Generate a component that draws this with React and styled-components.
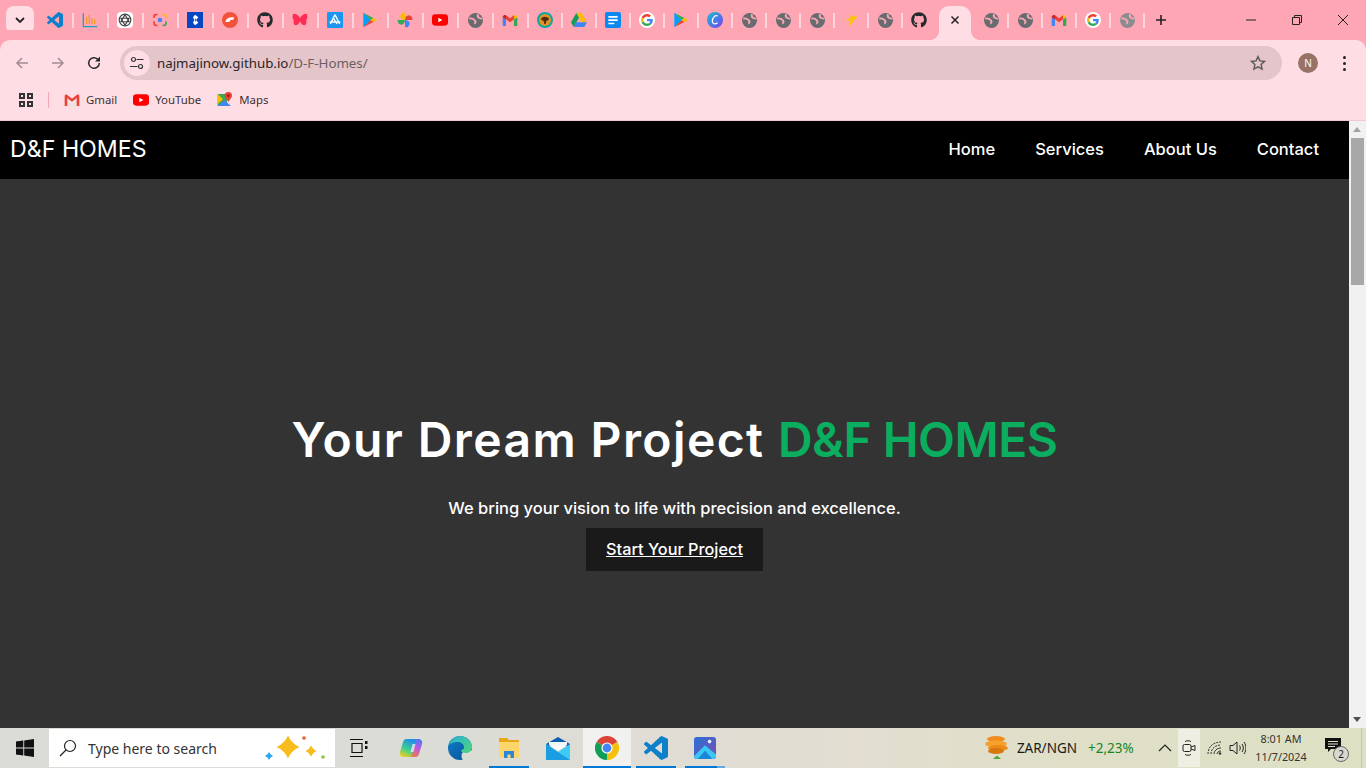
import React from 'react';
import styled, {createGlobalStyle} from 'styled-components';
import {FaGithub} from 'react-icons/fa';

const GOOGLE = [
    ['#EA4335', 'M24 9.5c3.54 0 6.71 1.22 9.21 3.6l6.85-6.85C35.9 2.38 30.47 0 24 0 14.62 0 6.51 5.38 2.56 13.22l7.98 6.19C12.43 13.72 17.74 9.5 24 9.5z'],
    ['#4285F4', 'M46.98 24.55c0-1.57-.15-3.09-.38-4.55H24v9.02h12.94c-.58 2.96-2.26 5.48-4.78 7.18l7.73 6c4.51-4.18 7.09-10.36 7.09-17.65z'],
    ['#FBBC05', 'M10.53 28.59c-.48-1.45-.76-2.99-.76-4.59s.27-3.14.76-4.59l-7.98-6.19C.92 16.46 0 20.12 0 24c0 3.88.92 7.54 2.56 10.78l7.97-6.19z'],
    ['#34A853', 'M24 48c6.48 0 11.93-2.13 16.03-5.81l-7.73-6c-2.15 1.45-4.92 2.3-8.3 2.3-6.26 0-11.57-4.22-13.47-9.91l-7.98 6.19C6.51 42.62 14.62 48 24 48z'],
];
const VSCODE = 'M23.15 2.587L18.21.21a1.494 1.494 0 0 0-1.705.29l-9.46 8.63-4.12-3.128a.999.999 0 0 0-1.276.057L.327 7.261A1 1 0 0 0 .326 8.74L3.899 12 .326 15.26a1 1 0 0 0 .001 1.479L1.65 17.94a.999.999 0 0 0 1.276.057l4.12-3.128 9.46 8.63a1.492 1.492 0 0 0 1.704.29l4.942-2.377A1.5 1.5 0 0 0 24 20.06V3.939a1.5 1.5 0 0 0-.85-1.352zm-5.146 14.861L10.826 12l7.178-5.448v10.896z';

const Ico = ({size = 16, box = 24, children}) => (
    <svg width={size} height={size} viewBox={`0 0 ${box} ${box}`} style={{display: 'block', flex: 'none'}}>{children}</svg>
);

const Globe = ({faded}) => (
    <Ico size={15}>
        <circle cx="12" cy="12" r="12" fill={faded ? '#8b8c8f' : '#686c70'}/>
        <path d="M2 9c4-1 7 0 9 3 2 2 1 4-1 5M16 2c-1 3 0 5 2 6 2 1 3 1 5 1" fill="none" stroke="#ffa6b5" strokeWidth="3"/>
    </Ico>
);
const GoogleG = ({size = 12}) => <Ico size={size} box={48}>{GOOGLE.map(([c, d]) => <path key={c} fill={c} d={d}/>)}</Ico>;
const GoogleRound = () => (
    <GoogleDisc><GoogleG/></GoogleDisc>
);
const VsCode = ({size = 16}) => <Ico size={size}><path fill="#0e80c9" d={VSCODE}/></Ico>;
const Gmail = ({size = 16}) => (
    <Ico size={size}>
        <path fill="#4285f4" d="M1 8v12a1 1 0 0 0 1 1h4V11z"/>
        <path fill="#34a853" d="M23 8v12a1 1 0 0 1-1 1h-4V11z"/>
        <path fill="#ea4335" d="M6 11V5l6 4.500 6-4.500v6l-6 4.500z"/>
        <path fill="#c5221f" d="M1 8c0-3 3-4.500 5-3v6z"/>
        <path fill="#fbbc04" d="M23 8c0-3-3-4.500-5-3v6z"/>
    </Ico>
);
const GmailOutline = () => (
    <Ico size={16}>
        <path fill="#efe3e3" d="M5 9l7 5.500L19 9v12H5z"/>
        <path fill="#ea4335" d="M1 6c0-2 2-3 3.500-2L12 10l7.500-6C21 3 23 4 23 6v15h-4V9l-7 5.500L5 9v12H1z"/>
    </Ico>
);
const YouTube = ({size = 16}) => (
    <Ico size={size}>
        <rect x="0" y="3.500" width="24" height="17" rx="5" fill="#f00"/>
        <path d="M9.500 8.500v7l6-3.500z" fill="#fff"/>
    </Ico>
);
const Play = () => (
    <Ico>
        <path fill="#00a0ff" d="M2 1v22l11-11z"/>
        <path fill="#34a853" d="M2 1l15 8-4 3z"/>
        <path fill="#ea4335" d="M2 23l15-8-4-3z"/>
        <path fill="#fbbc04" d="M17 9l6 3-6 3-4-3z"/>
    </Ico>
);
const Pinwheel = () => (
    <Ico>
        <path fill="#fbbc04" d="M12 12V1a6.500 6.500 0 0 0-7 5.500c0 3.500 3.500 5.500 7 5.500z"/>
        <path fill="#ea4335" d="M12 12h11a6.500 6.500 0 0 0-5.500-7c-3.500 0-5.500 3.500-5.500 7z"/>
        <path fill="#4285f4" d="M12 12v11a6.500 6.500 0 0 0 7-5.500c0-3.500-3.500-5.500-7-5.500z"/>
        <path fill="#34a853" d="M12 12H1a6.500 6.500 0 0 0 5.500 7c3.500 0 5.500-3.500 5.500-7z"/>
    </Ico>
);
const Drive = () => (
    <Ico>
        <path fill="#fbbc04" d="M8 1.500h8L24 15.500h-8z"/>
        <path fill="#0f9d58" d="M8 1.500L0 15.500l4 7L12 8.500z"/>
        <path fill="#4285f4" d="M8 15.500h16l-4 7H4z"/>
    </Ico>
);
const Docs = () => (
    <Ico>
        <rect width="24" height="24" rx="3" fill="#0c88f2"/>
        <path d="M5 6h14v2.500H5zM5 11h14v2.500H5zM5 16h9v2.500H5z" fill="#fff"/>
    </Ico>
);
const Chrome = () => (
    <Ico size={24}>
        <path fill="#db4437" d="M12 12L1.600 6A12 12 0 0 1 22.400 6z"/>
        <path fill="#f4c20d" d="M12 12L22.400 6A12 12 0 0 1 12 24z"/>
        <path fill="#0f9d58" d="M12 12V24A12 12 0 0 1 1.600 6z"/>
        <circle cx="12" cy="12" r="5.600" fill="#fff"/>
        <circle cx="12" cy="12" r="4.400" fill="#4285f4"/>
    </Ico>
);
const Star4 = ({x, y, r, fill}) => (
    <path fill={fill} d={`M${x} ${y - r}Q${x + r * .3} ${y - r * .3} ${x + r} ${y}Q${x + r * .3} ${y + r * .3} ${x} ${y + r}Q${x - r * .3} ${y + r * .3} ${x - r} ${y}Q${x - r * .3} ${y - r * .3} ${x} ${y - r}z`}/>
);

const firstTabs = () => [
    <VsCode/>,
    <Ico><path d="M2 2v20h21" fill="none" stroke="#19a3c4" strokeWidth="2"/><path d="M7 18V8M11 18V4M15 18V9M19 18V11" stroke="#f59a23" strokeWidth="2"/></Ico>,
    <ChatDisc><Ico size={14}><g fill="none" stroke="#444" strokeWidth="2"><circle cx="12" cy="12" r="10"/><path d="M12 3l7 12H5zM12 21L5 9h14z"/></g></Ico></ChatDisc>,
    <Ico><g fill="none" strokeWidth="2.400"><path d="M8 4H6a3 3 0 0 0-3 3v2" stroke="#ea4335"/><path d="M16 4h2a3 3 0 0 1 3 3v2" stroke="#fbbc04"/><path d="M3 14v3a3 3 0 0 0 3 3h2" stroke="#ea4335"/><path d="M16 20h2a3 3 0 0 0 3-3v-3" stroke="#34a853"/></g><circle cx="12" cy="12" r="3.500" fill="#4285f4"/></Ico>,
    <Ico><rect width="24" height="24" fill="#0747c4"/><path d="M12 4l5 4-3.500 4 3.500 4-5 4-3-4 2-4-2-4z" fill="#fff"/><path d="M12 8.500l1.500 3.500-1.500 3.500z" fill="#0747c4"/></Ico>,
    <Ico><circle cx="12" cy="12" r="12" fill="#f0533a"/><path d="M5 15c1-6 6-8 13-7l-1 4c-3-1-5 0-6 3z" fill="#fff"/></Ico>,
    <FaGithub size={16} color="#24292e"/>,
    <Ico><path fill="#ff2d55" d="M12 9C9 4 4 2 2 3 0 5 1 11 3 13c-2 2 0 7 3 7 3 0 5-4 6-6 1 2 3 6 6 6 3 0 5-5 3-7 2-2 3-8 1-10-2-1-7 1-10 6z"/></Ico>,
    <Ico><rect width="24" height="24" rx="2" fill="#1a95f2"/><path d="M12 4l-7 14M12 4l7 14M4 15h16M9 8l6 10" stroke="#fff" strokeWidth="2" fill="none"/></Ico>,
    <Play/>,
    <Pinwheel/>,
    <YouTube/>,
    <Globe/>,
    <Gmail/>,
    <Ico><circle cx="12" cy="12" r="12" fill="#0aa5a8"/><circle cx="12" cy="12" r="9" fill="#e8921c"/><path d="M6 10c2-4 10-4 12 0-1 3-3 3-4 3l-1 5h-2l-1-5c-1 0-3 0-4-3z" fill="#4a2c10"/></Ico>,
];
const middleTabs = () => [
    <Drive/>,
    <Docs/>,
    <GoogleRound/>,
    <Play/>,
    <Ico><defs><linearGradient id="cv" x1="0" y1="0" x2="1" y2="1"><stop offset="0" stopColor="#12c2d6"/><stop offset="1" stopColor="#7a3df0"/></linearGradient></defs><circle cx="12" cy="12" r="12" fill="url(#cv)"/><path d="M16 6c-4-2-8 3-8 8 0 4 4 5 8 2" fill="none" stroke="#fff" strokeWidth="1.800"/></Ico>,
    <Globe/>,
    <Globe/>,
    <Globe/>,
    <Ico><path fill="#f7c600" d="M12 1l3 6 8-1-6 6-7 10 1-9-9-3 9 0z"/></Ico>,
    <Globe/>,
    <FaGithub size={16} color="#24292e"/>,
];
const lastTabs = () => [<Globe/>, <Globe/>, <Gmail/>, <GoogleRound/>, <Globe faded/>];

const NAV = ['Home', 'Services', 'About Us', 'Contact'];

const GlobalStyle = createGlobalStyle`
    html, body {
        margin: 0;
        height: 100%;
        overflow: hidden;
    }
    * {
        box-sizing: border-box;
    }
`;

const App = () => {
    const middle = middleTabs();
    return (
    <Screen>
        <GlobalStyle/>
        <TabStrip>
            <ListButton>
                <svg width="10" height="6" viewBox="0 0 10 6"><path d="M1 1l4 4 4-4" fill="none" stroke="#222" strokeWidth="1.800"/></svg>
            </ListButton>
            {firstTabs().map((icon, i) => <PinnedTab key={i} $w={i === 14 ? 34.5 : 35}>{icon}</PinnedTab>)}
            {middle.map((icon, i) => <PinnedTab key={i} $w={34} $last={i === middle.length - 1}>{icon}</PinnedTab>)}
            <ActiveTab>
                <svg width="10" height="10" viewBox="0 0 10 10"><path d="M1.500 1.500l7 7M8.500 1.500l-7 7" stroke="#222" strokeWidth="1.500"/></svg>
            </ActiveTab>
            {lastTabs().map((icon, i) => <PinnedTab key={i} $w={34}>{icon}</PinnedTab>)}
            <NewTab>
                <svg width="12" height="12" viewBox="0 0 12 12"><path d="M6 1v10M1 6h10" stroke="#222" strokeWidth="1.600"/></svg>
            </NewTab>
            <WindowControls>
                <WindowButton><svg width="12" height="12" viewBox="0 0 12 12"><path d="M1 6h10" stroke="#222"/></svg></WindowButton>
                <WindowButton><svg width="12" height="12" viewBox="0 0 12 12"><path d="M1.500 3.500h7v7h-7zM3.500 3.500v-2h7v7h-2" fill="none" stroke="#222"/></svg></WindowButton>
                <WindowButton><svg width="12" height="12" viewBox="0 0 12 12"><path d="M1 1l10 10M11 1L1 11" stroke="#222"/></svg></WindowButton>
            </WindowControls>
        </TabStrip>

        <Toolbar>
            <ToolIcon>
                <svg width="16" height="16" viewBox="0 0 16 16"><path d="M14 8H3M8 3L3 8l5 5" fill="none" stroke="#a08c91" strokeWidth="1.500"/></svg>
            </ToolIcon>
            <ToolIcon>
                <svg width="16" height="16" viewBox="0 0 16 16"><path d="M2 8h11M8 3l5 5-5 5" fill="none" stroke="#a08c91" strokeWidth="1.500"/></svg>
            </ToolIcon>
            <ToolIcon>
                <svg width="16" height="16" viewBox="0 0 16 16"><path d="M13.300 8a5.300 5.300 0 1 1-1.600-3.800L13.500 6" fill="none" stroke="#2b2b2b" strokeWidth="1.500"/><path d="M14 1.500V6.500H9z" fill="#2b2b2b"/></svg>
            </ToolIcon>
            <Omnibox>
                <SiteInfo>
                    <svg width="14" height="14" viewBox="0 0 14 14"><g fill="none" stroke="#333" strokeWidth="1.200"><circle cx="3.500" cy="3.500" r="2"/><path d="M6.500 3.500h7M0 10.500h7.500"/><circle cx="10.500" cy="10.500" r="2"/></g></svg>
                </SiteInfo>
                <Url>najmajinow.github.io<span>/D-F-Homes/</span></Url>
                <StarIcon>
                    <svg width="16" height="16" viewBox="0 0 24 24"><path d="M12 2.500l2.900 6.300 6.900.8-5.100 4.700 1.400 6.800L12 17.700l-6.100 3.400 1.400-6.800-5.100-4.700 6.900-.8z" fill="none" stroke="#5f5a5e" strokeWidth="2.200"/></svg>
                </StarIcon>
            </Omnibox>
            <Avatar>N</Avatar>
            <MenuDots><i/><i/><i/></MenuDots>
        </Toolbar>

        <BookmarkBar>
            <AppsGrid><i/><i/><i/><i/></AppsGrid>
            <BarDivider/>
            <Bookmark><GmailOutline/>Gmail</Bookmark>
            <Bookmark><YouTube/>YouTube</Bookmark>
            <Bookmark>
                <Ico size={16}>
                    <path fill="#34a853" d="M1 3h14v18H1z"/>
                    <path fill="#4285f4" d="M1 21l10-9 10 9z"/>
                    <path fill="#fbbc04" d="M1 3l8 8-8 7z"/>
                    <path fill="#ea4335" d="M17 0a5.500 5.500 0 0 0-5.500 5.500C11.500 9 15 11 17 15c2-4 5.500-6 5.500-9.500A5.500 5.500 0 0 0 17 0z"/>
                    <circle cx="17" cy="5.500" r="2" fill="#a31515"/>
                </Ico>
                Maps
            </Bookmark>
        </BookmarkBar>

        <Viewport>
            <Page>
                <Navbar>
                    <Logo>D&amp;F HOMES</Logo>
                    <NavLinks>
                        {NAV.map(item => <NavLink key={item}>{item}</NavLink>)}
                    </NavLinks>
                </Navbar>
                <Hero>
                    <HeroTitle>Your Dream Project <em>D&amp;F HOMES</em></HeroTitle>
                    <HeroText>We bring your vision to life with precision and excellence.</HeroText>
                    <HeroButton>Start Your Project</HeroButton>
                </Hero>
            </Page>
            <Scrollbar>
                <ArrowUp/>
                <Thumb/>
                <ArrowDown/>
            </Scrollbar>
        </Viewport>

        <Taskbar>
            <StartButton>
                <svg width="18" height="18" viewBox="0 0 18 18"><path fill="#111" d="M0 2.600l7.300-1v7H0zM8.200 1.400L18 0v8.600H8.200zM0 9.400h7.300v7L0 15.400zM8.200 9.400H18V18l-9.800-1.400z"/></svg>
            </StartButton>
            <SearchBox>
                <svg width="18" height="18" viewBox="0 0 18 18"><g fill="none" stroke="#222" strokeWidth="1.200"><circle cx="11" cy="7" r="5.500"/><path d="M7 11l-6 6"/></g></svg>
                <SearchText>Type here to search</SearchText>
                <Sparkles>
                    <svg width="62" height="30" viewBox="0 0 62 30">
                        <Star4 x={4} y={23} r={4} fill="#2ea8f0"/>
                        <Star4 x={23} y={14} r={11.500} fill="#f8bd1c"/>
                        <Star4 x={46} y={18} r={5.500} fill="#f8bd1c"/>
                        <circle cx="39" cy="5" r="1.800" fill="#e8612c"/>
                        <circle cx="58" cy="24" r="1.800" fill="#8cc63f"/>
                    </svg>
                </Sparkles>
            </SearchBox>
            <TaskItems>
                <TaskItem>
                    <svg width="24" height="20" viewBox="0 0 24 20"><g fill="none" stroke="#111" strokeWidth="1.200"><path d="M0 1.500h13M0 18.500h13M2 5.500h10v9H2z"/></g><path d="M15 3h2.500v3H15zM15 8h2.500v3H15z" fill="#111"/></svg>
                </TaskItem>
                <TaskItem>
                    <svg width="24" height="20" viewBox="0 0 24 20">
                        <defs>
                            <linearGradient id="cp1" x1=".6" y1="0" x2=".2" y2="1"><stop offset="0" stopColor="#1f8fe8"/><stop offset=".55" stopColor="#3fd08c"/><stop offset="1" stopColor="#f5d020"/></linearGradient>
                            <linearGradient id="cp2" x1=".7" y1="0" x2=".3" y2="1"><stop offset="0" stopColor="#4a7cf0"/><stop offset=".45" stopColor="#c455e0"/><stop offset="1" stopColor="#f58030"/></linearGradient>
                        </defs>
                        <path fill="url(#cp2)" d="M17 19h-7c-1 0-2-.5-2.500-2L11 3c.5-1.500 1.500-2 3-2h5c3 0 5 2 4 5l-3 10c-.5 2-2 3-3 3z"/>
                        <path fill="url(#cp1)" d="M7 1h7c1 0 2 .5 2.500 2L13 17c-.5 1.500-1.500 2-3 2H5c-3 0-5-2-4-5L4 4C4.500 2 6 1 7 1z"/>
                        <path fill="#f5f0f5" d="M13.500 6h3L14.500 14h-3z" opacity=".75"/>
                    </svg>
                </TaskItem>
                <TaskItem>
                    <Ico size={24}>
                        <defs>
                            <linearGradient id="ed1" x1="0" y1="0" x2="1" y2="1"><stop offset="0" stopColor="#2bb3d6"/><stop offset="1" stopColor="#52d47c"/></linearGradient>
                            <linearGradient id="ed2" x1="0" y1="0" x2="1" y2="1"><stop offset="0" stopColor="#0c7fc8"/><stop offset="1" stopColor="#0b4f96"/></linearGradient>
                        </defs>
                        <circle cx="12" cy="12" r="12" fill="url(#ed2)"/>
                        <circle cx="20" cy="20" r="6.500" fill="#dcdcd6"/>
                        <path fill="url(#ed1)" d="M1 9C3 3 8 0 12 0c7 0 12 5 12 11 0 4-3 6-6 6-3 0-5-1-5-3 2 0 3-1 3-3 0-3-3-5-7-5-3 0-6 1-8 3z"/>
                    </Ico>
                </TaskItem>
                <TaskItem $open>
                    <svg width="24" height="22" viewBox="0 0 24 22">
                        <path fill="#e6a817" d="M2 1h8l2 2h10v4H2z"/>
                        <path fill="#fcd56b" d="M2 5h20v15a1 1 0 0 1-1 1H3a1 1 0 0 1-1-1z"/>
                        <path fill="#2e86d6" d="M7 21v-7h10v7h-3.500v-3.500h-3V21z"/>
                    </svg>
                </TaskItem>
                <TaskItem>
                    <svg width="24" height="23" viewBox="0 0 24 23">
                        <path fill="#0a5fb0" d="M12 0l12 7v2H0V7z"/>
                        <path fill="#3ccbf4" d="M0 7l12 8 12-8v16H0z"/>
                        <path fill="#1b9de2" d="M0 7l12 8 12 8H0z"/>
                        <path fill="#fff" d="M3 5h18v3l-9 6-9-6z" opacity=".95"/>
                    </svg>
                </TaskItem>
                <TaskItem $open $active><Chrome/></TaskItem>
                <TaskItem $open><VsCode size={24}/></TaskItem>
                <TaskItem $open $split>
                    <Ico size={22}>
                        <defs>
                            <linearGradient id="ph" x1="0" y1="0" x2="1" y2="1"><stop offset="0" stopColor="#2a6fd6"/><stop offset="1" stopColor="#7a4fb5"/></linearGradient>
                        </defs>
                        <rect width="24" height="24" rx="3" fill="url(#ph)"/>
                        <path fill="#38c8f2" d="M0 21l12-12 12 10v2a3 3 0 0 1-3 3H3a3 3 0 0 1-3-3z"/>
                        <path fill="#1b85d8" d="M12 15l8 9H4z"/>
                        <circle cx="17" cy="5" r="2" fill="#e8eef8"/>
                    </Ico>
                </TaskItem>
            </TaskItems>
            <Tray>
                <CoinIcon>
                    <svg width="24" height="24" viewBox="0 0 24 24">
                        <ellipse cx="11" cy="3" rx="9" ry="3" fill="#f08c1e"/>
                        <ellipse cx="11" cy="8" rx="11" ry="3.500" fill="#f5a12b"/>
                        <ellipse cx="13" cy="12" rx="10" ry="3" fill="#ee8a17"/>
                        <ellipse cx="11" cy="15" rx="8" ry="3" fill="#d9770f"/>
                        <path d="M8 23l4-3.500 4 3.500z" fill="#55a630"/>
                    </svg>
                </CoinIcon>
                <Pair>ZAR/NGN</Pair>
                <Change>+2,23%</Change>
                <TrayCaret>
                    <svg width="14" height="8" viewBox="0 0 14 8"><path d="M1 7l6-6 6 6" fill="none" stroke="#222" strokeWidth="1.200"/></svg>
                </TrayCaret>
                <MeetBox>
                    <svg width="14" height="16" viewBox="0 0 14 16"><g fill="none" stroke="#222" strokeWidth="1"><rect x="1" y="4.500" width="8" height="7" rx="1.500"/><path d="M9 7l4-1.500v5L9 9M3 1.500c2-1 4-1 6 0M3 14.500c2 1 4 1 6 0"/></g></svg>
                </MeetBox>
                <TrayIcon>
                    <svg width="15" height="14" viewBox="0 0 15 14"><g fill="none" stroke="#333" strokeWidth="1"><path d="M1 13C1 6 6 1 14 1" strokeDasharray="2 1"/><path d="M4 13c0-5 4-9 10-9" strokeDasharray="2 1"/><path d="M7 13c0-3 3-6 7-6"/><path d="M10 13c0-1 1-3 4-3"/></g><circle cx="13" cy="12.500" r="1.300" fill="#333"/></svg>
                </TrayIcon>
                <TrayIcon>
                    <svg width="17" height="14" viewBox="0 0 17 14"><g fill="none" stroke="#222" strokeWidth="1"><path d="M1 4.500h3L8 1v12L4 9.500H1z"/><path d="M10.500 4.500c1 1.500 1 3.500 0 5M13 3c1.800 2.500 1.800 5.500 0 8M15 1c2.600 3.500 2.600 8.500 0 12"/></g></svg>
                </TrayIcon>
                <Clock>
                    <span>8:01 AM</span>
                    <span>11/7/2024</span>
                </Clock>
                <Notification>
                    <svg width="16" height="15" viewBox="0 0 16 15"><path fill="#111" d="M0 0h16v11H6l-3 3v-3H0z"/><path stroke="#e0e0d0" d="M3 3.500h10M3 6h10M3 8.500h7"/></svg>
                    <Badge>2</Badge>
                </Notification>
                <ShowDesktop/>
            </Tray>
        </Taskbar>
    </Screen>
    );
};

export default App;

const Screen = styled.div`
    display: flex;
    flex-direction: column;
    width: 1366px;
    height: 768px;
    overflow: hidden;
    background: #ffdde4;
    font-family: "Noto Sans", "Open Sans", sans-serif;
`;

const TabStrip = styled.div`
    display: flex;
    align-items: flex-start;
    flex: none;
    height: 40px;
    padding-left: 6px;
    background: #ffa6b5;
`;

const ListButton = styled.div`
    display: flex;
    align-items: center;
    justify-content: center;
    flex: none;
    width: 28px;
    height: 28px;
    margin: 6px 3.5px 0 0;
    border-radius: 8px;
    background: #ffdde4;
`;

const PinnedTab = styled.div`
    position: relative;
    display: flex;
    align-items: center;
    justify-content: center;
    flex: none;
    width: ${props => props.$w}px;
    height: 16px;
    margin-top: 12px;
    &::after {
        content: ${props => props.$last ? 'none' : '""'};
        position: absolute;
        top: 1px;
        right: -1px;
        width: 2px;
        height: 15px;
        background: #ffd6de;
    }
`;

const ChatDisc = styled.div`
    display: flex;
    align-items: center;
    justify-content: center;
    width: 16px;
    height: 16px;
    border-radius: 4px;
    background: #fff;
`;

const GoogleDisc = styled.div`
    display: flex;
    align-items: center;
    justify-content: center;
    width: 16px;
    height: 16px;
    border-radius: 50%;
    background: #fff;
`;

const ActiveTab = styled.div`
    position: relative;
    z-index: 1;
    display: flex;
    align-items: center;
    justify-content: center;
    flex: none;
    width: 32px;
    height: 34px;
    margin: 6px 3px 0;
    padding-bottom: 6px;
    border-radius: 10px 10px 0 0;
    background: #ffdde4;
    &::before, &::after {
        content: "";
        position: absolute;
        bottom: 0;
        width: 10px;
        height: 10px;
    }
    &::before {
        left: -10px;
        background: radial-gradient(circle at 0 0, transparent 10px, #ffdde4 10.5px);
    }
    &::after {
        right: -10px;
        background: radial-gradient(circle at 100% 0, transparent 10px, #ffdde4 10.5px);
    }
`;

const NewTab = styled.div`
    display: flex;
    align-items: center;
    justify-content: center;
    flex: none;
    width: 34px;
    height: 16px;
    margin-top: 12px;
`;

const WindowControls = styled.div`
    display: flex;
    margin-left: auto;
`;

const WindowButton = styled.div`
    display: flex;
    align-items: center;
    justify-content: center;
    width: 46px;
    height: 40px;
`;

const Toolbar = styled.div`
    display: flex;
    align-items: center;
    flex: none;
    height: 44px;
    padding: 6px 0 4px 4px;
    border-radius: 10px 10px 0 0;
    background: #ffdde4;
    box-shadow: 0 -10px 0 #ffa6b5;
`;

const ToolIcon = styled.div`
    display: flex;
    align-items: center;
    justify-content: center;
    flex: none;
    width: 36px;
    height: 34px;
`;

const Omnibox = styled.div`
    display: flex;
    align-items: center;
    flex: none;
    width: 1162px;
    height: 34px;
    margin-left: 8px;
    padding: 0 16px 0 4px;
    border-radius: 17px;
    background: #e4c5ca;
`;

const SiteInfo = styled.div`
    display: flex;
    align-items: center;
    justify-content: center;
    width: 26px;
    height: 26px;
    border-radius: 50%;
    background: #ffdde4;
`;

const Url = styled.div`
    flex: 1;
    margin-left: 7px;
    font-size: 13.3px;
    color: #2a2426;
    span {
        color: #6a5e62;
    }
`;

const StarIcon = styled.div`
    display: flex;
`;

const Avatar = styled.div`
    display: flex;
    align-items: center;
    justify-content: center;
    flex: none;
    width: 20px;
    height: 20px;
    margin-left: 16px;
    border-radius: 50%;
    background: #977265;
    color: #fff;
    font-size: 10px;
`;

const MenuDots = styled.div`
    display: flex;
    flex-direction: column;
    gap: 3px;
    margin-left: 25px;
    i {
        width: 3px;
        height: 3px;
        border-radius: 50%;
        background: #222;
    }
`;

const BookmarkBar = styled.div`
    display: flex;
    align-items: center;
    flex: none;
    height: 37px;
    padding: 0 0 5px 19px;
    border-bottom: 1px solid #f0c8d0;
    background: #ffdde4;
`;

const AppsGrid = styled.div`
    display: grid;
    grid-template-columns: 6px 6px;
    gap: 2px;
    i {
        width: 6px;
        height: 6px;
        border: 2px solid #333;
    }
`;

const BarDivider = styled.div`
    width: 1px;
    height: 16px;
    margin: 0 15px;
    background: #f5a8b6;
`;

const Bookmark = styled.div`
    display: flex;
    align-items: center;
    gap: 6px;
    margin-right: 16px;
    font-size: 11.4px;
    color: #3a3335;
`;

const Viewport = styled.div`
    display: flex;
    flex: 1;
    min-height: 0;
`;

const Page = styled.div`
    display: flex;
    flex-direction: column;
    flex: 1;
    min-width: 0;
    font-family: Inter, "Noto Sans", sans-serif;
    color: #fff;
`;

const Navbar = styled.nav`
    display: flex;
    align-items: center;
    justify-content: space-between;
    flex: none;
    height: 58px;
    padding: 0 30px 0 10px;
    background: #000;
`;

const Logo = styled.div`
    margin-bottom: 2px;
    font-size: 23.2px;
    font-weight: 400;
`;

const NavLinks = styled.div`
    display: flex;
    gap: 40px;
    margin-bottom: 2px;
`;

const NavLink = styled.a`
    font-size: 16.5px;
    font-weight: 500;
`;

const Hero = styled.section`
    display: flex;
    flex-direction: column;
    align-items: center;
    flex: 1;
    padding-top: 230px;
    background: #333;
`;

const HeroTitle = styled.h1`
    margin: 0;
    font-size: 48px;
    line-height: 62px;
    font-weight: 600;
    letter-spacing: 1.4px;
    em {
        font-style: normal;
        letter-spacing: -.5px;
        color: #0bad5f;
    }
`;

const HeroText = styled.p`
    margin: 25px 0 0;
    font-size: 16.5px;
    line-height: 25px;
    font-weight: 500;
`;

const HeroButton = styled.a`
    display: flex;
    align-items: center;
    justify-content: center;
    width: 177px;
    height: 43px;
    margin-top: 7px;
    padding-bottom: 2px;
    background: #1a1a1a;
    font-size: 16.3px;
    font-weight: 500;
    text-decoration: underline;
`;

const Scrollbar = styled.div`
    position: relative;
    flex: none;
    width: 17px;
    background: #f1f1f1;
`;

const ArrowUp = styled.div`
    position: absolute;
    top: 6px;
    left: 4px;
    border: 4.5px solid transparent;
    border-top: 0;
    border-bottom: 5px solid #a3a3a3;
`;

const ArrowDown = styled.div`
    position: absolute;
    bottom: 6px;
    left: 4px;
    border: 4.5px solid transparent;
    border-bottom: 0;
    border-top: 5px solid #505050;
`;

const Thumb = styled.div`
    position: absolute;
    top: 17px;
    left: 2px;
    width: 13px;
    height: 147px;
    background: #a8a8a8;
`;

const Taskbar = styled.footer`
    display: flex;
    align-items: stretch;
    flex: none;
    height: 40px;
    background: linear-gradient(90deg, #dbdcd6 0%, #dcdcd6 35%, #e2ddd2 60%, #e0dfc9 75%, #dde0c3 100%);
    font-family: "Noto Sans", "Open Sans", sans-serif;
    color: #1a1a1a;
`;

const StartButton = styled.div`
    display: flex;
    align-items: center;
    justify-content: center;
    flex: none;
    width: 49px;
`;

const SearchBox = styled.div`
    display: flex;
    align-items: center;
    flex: none;
    width: 286px;
    margin: 1px 0;
    padding-left: 10px;
    background: #fff;
`;

const SearchText = styled.span`
    margin-left: 11px;
    font-size: 14px;
    color: #333;
`;

const Sparkles = styled.div`
    display: flex;
    margin-left: auto;
    margin-right: 8px;
`;

const TaskItems = styled.div`
    display: flex;
    gap: 1px;
    margin-left: 3px;
`;

const TaskItem = styled.div`
    position: relative;
    display: flex;
    align-items: center;
    justify-content: center;
    width: 48px;
    background: ${props => props.$active ? '#f1f1ef' : 'transparent'};
    &::after {
        content: ${props => props.$open ? '""' : 'none'};
        position: absolute;
        bottom: 0;
        left: ${props => props.$active ? '0' : '4px'};
        right: ${props => props.$active ? '0' : '4px'};
        height: 2px;
        background: ${props => props.$split
            ? 'linear-gradient(90deg, #0078d4 80%, #64a8e0 80%)'
            : '#0078d4'};
    }
`;

const Tray = styled.div`
    display: flex;
    align-items: center;
    margin-left: auto;
`;

const CoinIcon = styled.div`
    display: flex;
    margin-right: 8px;
`;

const Pair = styled.span`
    margin-right: 11px;
    font-size: 13.5px;
`;

const Change = styled.span`
    width: 46px;
    font-size: 13.5px;
    color: #17861c;
`;

const TrayCaret = styled.div`
    display: flex;
    margin: 0 6px 0 24px;
`;

const MeetBox = styled.div`
    display: flex;
    align-items: center;
    justify-content: center;
    align-self: stretch;
    width: 22px;
    margin: 1px 0;
    background: #eeeee2;
`;

const TrayIcon = styled.div`
    display: flex;
    margin-left: 7px;
`;

const Clock = styled.div`
    display: flex;
    flex-direction: column;
    align-items: center;
    width: 62px;
    margin-left: 4px;
    font-size: 10.8px;
    line-height: 18px;
    color: #333;
`;

const Notification = styled.div`
    position: relative;
    display: flex;
    margin: 0 0 6px 13px;
`;

const Badge = styled.span`
    position: absolute;
    right: -8px;
    bottom: -9px;
    display: flex;
    align-items: center;
    justify-content: center;
    width: 16px;
    height: 16px;
    border: 1px solid #666;
    border-radius: 50%;
    background: #d8d8d0;
    font-size: 10px;
`;

const ShowDesktop = styled.div`
    align-self: stretch;
    width: 1px;
    margin: 0 4px 0 20px;
    background: #c4c6b0;
`;
